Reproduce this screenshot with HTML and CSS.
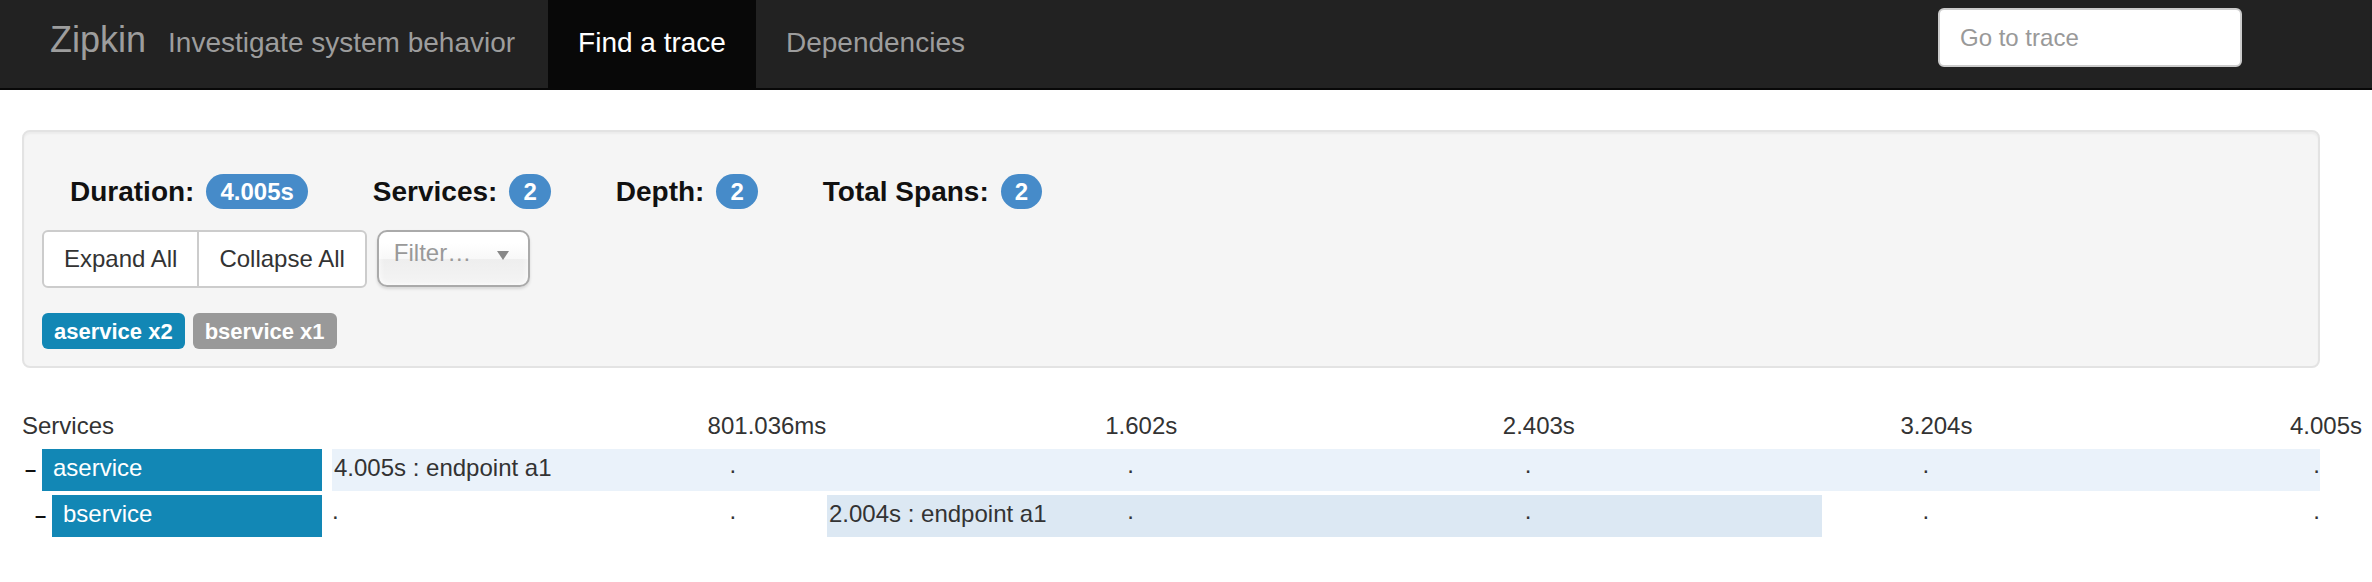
FILE: index.html
```html
<!DOCTYPE html>
<html lang="en">
<head>
<meta charset="utf-8">
<title>Zipkin</title>
<link rel="stylesheet" href="styles.css">
</head>
<body>
<nav class="navbar">
  <a class="brand">Zipkin</a>
  <span class="tagline">Investigate system behavior</span>
  <ul class="nav">
    <li class="nav-item active"><a class="nav-link">Find a trace</a></li>
    <li class="nav-item"><a class="nav-link">Dependencies</a></li>
  </ul>
  <input class="goto" type="text" placeholder="Go to trace">
</nav>

<main class="container">
  <section class="well">
    <div class="summary">
      <div class="stat"><strong class="stat-label">Duration:</strong><span class="badge">4.005s</span></div>
      <div class="stat"><strong class="stat-label">Services:</strong><span class="badge">2</span></div>
      <div class="stat"><strong class="stat-label">Depth:</strong><span class="badge">2</span></div>
      <div class="stat"><strong class="stat-label">Total Spans:</strong><span class="badge">2</span></div>
    </div>
    <div class="controls">
      <div class="btn-group">
        <button class="btn btn-first">Expand All</button>
        <button class="btn btn-last">Collapse All</button>
      </div>
      <div class="chosen">
        <span class="chosen-text">Filter…</span>
        <span class="chosen-arrow"></span>
      </div>
    </div>
    <div class="service-tags">
      <span class="tag tag-active">aservice x2</span>
      <span class="tag tag-muted">bservice x1</span>
    </div>
  </section>

  <section class="trace">
    <div class="trace-header">
      <div class="header-service">Services</div>
      <div class="axis">
        <span class="tick-label" style="left:20%">801.036ms</span>
        <span class="tick-label" style="left:40%">1.602s</span>
        <span class="tick-label" style="left:60%">2.403s</span>
        <span class="tick-label" style="left:80%">3.204s</span>
        <span class="tick-label tick-end" style="left:100%">4.005s</span>
      </div>
    </div>

    <div class="span-row">
      <div class="service-cell depth-0">
        <span class="toggle">–</span>
        <span class="service-name">aservice</span>
      </div>
      <div class="span-cell">
        <div class="span-bar bar-root" style="left:0%;width:100%"><span class="span-text">4.005s : endpoint a1</span></div>
        <span class="dot" style="left:20%">.</span>
        <span class="dot" style="left:40%">.</span>
        <span class="dot" style="left:60%">.</span>
        <span class="dot" style="left:80%">.</span>
        <span class="dot dot-end" style="left:100%">.</span>
      </div>
    </div>

    <div class="span-row">
      <div class="service-cell depth-1">
        <span class="toggle">–</span>
        <span class="service-name">bservice</span>
      </div>
      <div class="span-cell">
        <div class="span-bar bar-child" style="left:24.9%;width:50.04%"><span class="span-text">2.004s : endpoint a1</span></div>
        <span class="dot" style="left:0%">.</span>
        <span class="dot" style="left:20%">.</span>
        <span class="dot" style="left:40%">.</span>
        <span class="dot" style="left:60%">.</span>
        <span class="dot" style="left:80%">.</span>
        <span class="dot dot-end" style="left:100%">.</span>
      </div>
    </div>
  </section>
</main>
</body>
</html>
```

FILE: styles.css
```css
* { box-sizing: border-box; }

html, body {
  margin: 0;
  padding: 0;
  background: #fff;
}

body {
  font-family: "Liberation Sans", Arial, Helvetica, sans-serif;
  color: #333;
  font-size: 24px;
}

/* ---------- Navbar ---------- */
.navbar {
  display: flex;
  align-items: flex-start;
  height: 90px;
  padding: 0 130px 0 50px;
  background: #222;
  border-bottom: 2px solid #080808;
}

.brand {
  font-size: 36px;
  line-height: 40px;
  padding-top: 20px;
  height: 88px;
  color: #9d9d9d;
}

.tagline {
  font-size: 28px;
  line-height: 40px;
  padding-top: 23px;
  height: 88px;
  margin-left: 22px;
  color: #9d9d9d;
}

.nav {
  display: flex;
  list-style: none;
  margin: 0 0 0 33px;
  padding: 0;
}

.nav-item {
  height: 88px;
}

.nav-link {
  display: block;
  height: 88px;
  padding: 23px 30px 0;
  font-size: 28px;
  line-height: 40px;
  color: #9d9d9d;
}

.nav-item.active .nav-link {
  background: #080808;
  color: #fff;
}

.goto {
  margin-left: auto;
  margin-top: 8px;
  width: 304px;
  height: 59px;
  padding: 0 20px;
  border: 2px solid #ccc;
  border-radius: 6px;
  background: #fff;
  font-family: inherit;
  font-size: 24px;
  color: #555;
  outline: none;
}

.goto::placeholder {
  color: #999;
}

/* ---------- Container ---------- */
.container {
  padding: 40px 52px 0 22px;
}

/* ---------- Summary well ---------- */
.well {
  background: #f5f5f5;
  border: 2px solid #e3e3e3;
  border-radius: 8px;
  box-shadow: inset 0 2px 2px rgba(0, 0, 0, 0.04);
  padding: 42px 18px 17px;
}

.summary {
  display: flex;
  align-items: center;
  gap: 65px;
  height: 35px;
  padding-left: 28px;
}

.stat {
  display: flex;
  align-items: center;
  gap: 12px;
}

.stat-label {
  font-size: 28px;
  font-weight: bold;
  color: #111;
}

.badge {
  display: inline-block;
  height: 35px;
  padding: 0 14px;
  border-radius: 20px;
  background: #468bc9;
  color: #fff;
  font-size: 24px;
  font-weight: bold;
  line-height: 35px;
}

.controls {
  display: flex;
  align-items: flex-start;
  gap: 10px;
  margin-top: 21px;
}

.btn-group {
  display: flex;
}

.btn {
  height: 58px;
  padding: 0 20px;
  border: 2px solid #ccc;
  background: #fff;
  color: #333;
  font-family: inherit;
  font-size: 24px;
  line-height: 54px;
}

.btn-first {
  border-radius: 6px 0 0 6px;
}

.btn-last {
  border-radius: 0 6px 6px 0;
  margin-left: -2px;
}

.chosen {
  display: flex;
  align-items: flex-start;
  width: 153px;
  height: 57px;
  padding-left: 15px;
  border: 2px solid #aaa;
  border-radius: 10px;
  background: linear-gradient(#fff 20%, #f8f8f8 50%, #eee 52%, #f4f4f4 100%);
  box-shadow: inset 0 0 6px #fff, 0 2px 3px rgba(0, 0, 0, 0.12);
}

.chosen-text {
  font-size: 24px;
  line-height: 42px;
  color: #999;
}

.chosen-arrow {
  margin-left: auto;
  margin-right: 19px;
  margin-top: 19px;
  width: 0;
  height: 0;
  border-left: 6px solid transparent;
  border-right: 6px solid transparent;
  border-top: 9px solid #888;
}

.service-tags {
  display: flex;
  gap: 8px;
  margin-top: 25px;
}

.tag {
  display: inline-block;
  height: 36px;
  padding: 0 12px;
  border-radius: 6px;
  color: #fff;
  font-size: 22px;
  font-weight: bold;
  line-height: 38px;
}

.tag-active {
  background: #1287b5;
}

.tag-muted {
  background: #999;
}

/* ---------- Trace timeline ---------- */
.trace {
  margin-top: 41px;
}

.trace-header {
  display: flex;
  height: 40px;
}

.header-service {
  width: 310px;
  line-height: 34px;
  color: #333;
}

.axis {
  position: relative;
  flex: 1;
}

.tick-label {
  position: absolute;
  top: 0;
  margin-left: -22px;
  line-height: 34px;
  white-space: nowrap;
  color: #333;
}

.tick-label.tick-end {
  margin-left: -30px;
}

.span-row {
  display: flex;
  gap: 10px;
  height: 42px;
  margin-bottom: 4px;
}

.service-cell {
  display: flex;
  width: 300px;
}

.service-cell.depth-1 {
  padding-left: 10px;
}

.toggle {
  width: 20px;
  padding-left: 3px;
  font-size: 20px;
  font-weight: bold;
  line-height: 40px;
  color: #111;
}

.service-name {
  flex: 1;
  padding-left: 11px;
  background: #1287b5;
  color: #fff;
  line-height: 38px;
}

.span-cell {
  position: relative;
  flex: 1;
}

.span-bar {
  position: absolute;
  top: 0;
  bottom: 0;
}

.bar-root {
  background: #eaf2fa;
}

.bar-child {
  background: #dce8f3;
}

.span-text {
  display: block;
  padding-left: 2px;
  line-height: 38px;
  white-space: nowrap;
  color: #333;
}

.dot {
  position: absolute;
  top: 0;
  line-height: 32px;
  color: #333;
}

.dot.dot-end {
  transform: translateX(-100%);
}
```
